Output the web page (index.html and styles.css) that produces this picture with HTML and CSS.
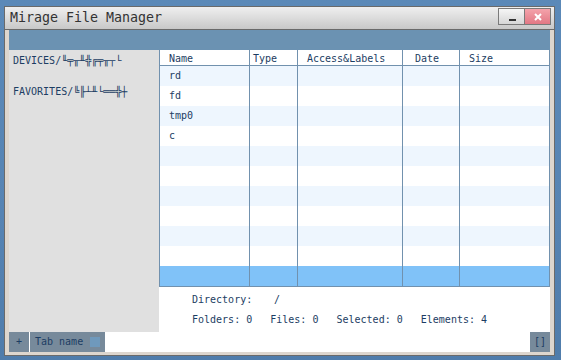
FILE: index.html
```html
<!DOCTYPE html>
<html lang="en">
<head>
    <meta charset="UTF-8">
    <meta name="viewport" content="width=device-width, initial-scale=1.0">
    <title>Mirage File Manager</title>
    <link rel="stylesheet" href="styles.css">
</head>
<body>
    <div class="window">
        <div class="titlebar">
            <span class="title">Mirage File Manager</span>
            <div class="controls">
                <button class="btn-min" type="button"></button>
                <button class="btn-close" type="button">
                    <svg width="8" height="8" viewBox="0 0 8 8"><path d="M1 1L7 7M7 1L1 7" stroke="#fff" stroke-width="2"/></svg>
                </button>
            </div>
        </div>
        <div class="toolbar"></div>
        <div class="main">
            <div class="sidebar">
                <div class="side-item">DEVICES/╙╤╥╨╬╔╤╥┬└</div>
                <div class="side-item">FAVORITES/╚╟┴╨└══╬┼</div>
            </div>
            <div class="content">
                <div class="table">
                    <div class="row head">
                        <div class="cell c-name">Name</div>
                        <div class="cell c-type">Type</div>
                        <div class="cell c-access">Access&amp;Labels</div>
                        <div class="cell c-date">Date</div>
                        <div class="cell c-size">Size</div>
                    </div>
                    <div class="row"><div class="cell c-name">rd</div><div class="cell"></div><div class="cell"></div><div class="cell"></div><div class="cell"></div></div>
                    <div class="row"><div class="cell c-name">fd</div><div class="cell"></div><div class="cell"></div><div class="cell"></div><div class="cell"></div></div>
                    <div class="row"><div class="cell c-name">tmp0</div><div class="cell"></div><div class="cell"></div><div class="cell"></div><div class="cell"></div></div>
                    <div class="row"><div class="cell c-name">c</div><div class="cell"></div><div class="cell"></div><div class="cell"></div><div class="cell"></div></div>
                    <div class="row"><div class="cell"></div><div class="cell"></div><div class="cell"></div><div class="cell"></div><div class="cell"></div></div>
                    <div class="row"><div class="cell"></div><div class="cell"></div><div class="cell"></div><div class="cell"></div><div class="cell"></div></div>
                    <div class="row"><div class="cell"></div><div class="cell"></div><div class="cell"></div><div class="cell"></div><div class="cell"></div></div>
                    <div class="row"><div class="cell"></div><div class="cell"></div><div class="cell"></div><div class="cell"></div><div class="cell"></div></div>
                    <div class="row"><div class="cell"></div><div class="cell"></div><div class="cell"></div><div class="cell"></div><div class="cell"></div></div>
                    <div class="row"><div class="cell"></div><div class="cell"></div><div class="cell"></div><div class="cell"></div><div class="cell"></div></div>
                    <div class="row selected"><div class="cell"></div><div class="cell"></div><div class="cell"></div><div class="cell"></div><div class="cell"></div></div>
                </div>
                <div class="info">
                    <div class="info-line"><span class="dir-label">Directory:</span>/</div>
                    <div class="info-line">Folders: 0   Files: 0   Selected: 0   Elements: 4</div>
                </div>
            </div>
        </div>
        <div class="bottombar">
            <div class="bbtn">+</div>
            <div class="tab">Tab name<span class="tab-close"></span></div>
            <div class="spacer"></div>
            <div class="bbtn">[]</div>
        </div>
    </div>
</body>
</html>
```

FILE: styles.css
```css
/* Mirage desktop */
body {
    margin: 0;
    height: 360px;
    overflow: hidden;
    background: linear-gradient(180deg, #5b89b8 0%, #5784b3 60%, #4f7cab 100%);
    font-family: "DejaVu Sans Mono", monospace;
    font-size: 10px;
    color: #1c3d63;
}
.window {
    margin: 6px 0 0 4px;
    width: 549px;
    border: 1px solid #6a6a6a;
    background-color: #ddd6ce;
}
.titlebar {
    display: flex;
    align-items: flex-start;
    height: 22px;
    border-bottom: 1px solid #6a6a6a;
    background: linear-gradient(180deg, #efefef 0%, #dcdcdc 50%, #c8c8c8 100%);
}
.title {
    padding-left: 5px;
    font-size: 13.3px;
    line-height: 22px;
    color: #333;
}
.controls {
    display: flex;
    margin-left: auto;
    margin-right: 3px;
    padding-top: 1px;
}
.controls button {
    width: 27px;
    height: 17px;
    padding: 0;
    border: 1px solid #7a7a7a;
    display: flex;
    align-items: center;
    justify-content: center;
    cursor: pointer;
}
.btn-min {
    position: relative;
    background: linear-gradient(180deg, #f6f6f6 0%, #d6d6d6 100%);
}
.btn-min::after {
    content: "";
    position: absolute;
    left: 10px;
    top: 10px;
    width: 7px;
    height: 2px;
    background-color: #333;
}
.btn-close {
    margin-left: -1px;
    background: linear-gradient(180deg, #f4a3ab 0%, #e27884 100%);
}
.toolbar {
    height: 20px;
    margin: 0 4px;
    background-color: #6b92b2;
}
.main {
    display: flex;
    height: 282px;
    margin: 0 4px;
}
.sidebar {
    width: 146px;
    padding: 1px 0 0 4px;
    background-color: #e0e0e0;
}
.side-item {
    line-height: 20px;
    margin-bottom: 11px;
    white-space: pre;
}
.content {
    flex: 1;
    display: flex;
    flex-direction: column;
    background-color: #fff;
}
.table {
    border-left: 1px solid #7191ae;
}
.row {
    display: grid;
    grid-template-columns: 90px 48px 105px 57px 90px;
    height: 20px;
    line-height: 20px;
}
.row:nth-child(even) {
    background-color: #eef6fe;
}
.row.head {
    height: 15px;
    line-height: 12px;
    border-bottom: 1px solid #7191ae;
    background-color: #fff;
}
.row.head .cell {
    padding-top: 3px;
}
.row.selected {
    background-color: #80c2f8;
    border-bottom: 1px solid #7191ae;
}
.cell {
    border-right: 1px solid #7191ae;
    white-space: pre;
    overflow: hidden;
}
.c-name {
    padding-left: 9px;
}
.c-type {
    padding-left: 3px;
}
.c-access {
    padding-left: 9px;
}
.c-date {
    padding-left: 12px;
}
.c-size {
    padding-left: 9px;
}
.info {
    flex: 1;
    padding: 3px 0 0 33px;
    line-height: 20px;
}
.info-line {
    white-space: pre;
}
.dir-label {
    display: inline-block;
    width: 82px;
}
.bottombar {
    display: flex;
    height: 20px;
    margin: 0 4px 3px 4px;
    background-color: #fff;
    line-height: 20px;
}
.bbtn {
    width: 20px;
    text-align: center;
    background-color: #778a9b;
}
.tab {
    display: flex;
    align-items: center;
    margin-left: 1px;
    padding: 0 5px;
    background-color: #778a9b;
}
.tab-close {
    width: 10px;
    height: 10px;
    margin-left: 7px;
    background-color: #6f99bc;
}
.spacer {
    flex: 1;
}
```
